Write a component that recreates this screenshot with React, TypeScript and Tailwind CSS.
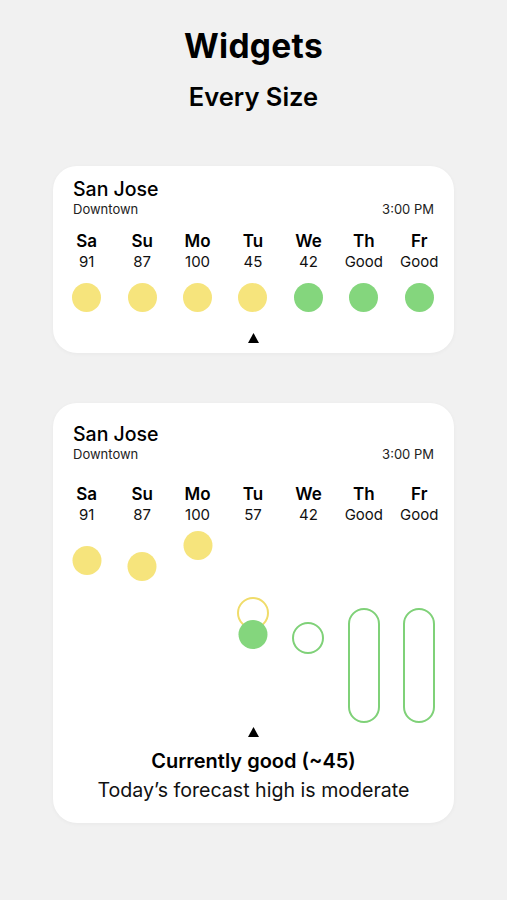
import React from "react";

const YELLOW = "#f6e47c";
const GREEN = "#84d67d";

const days = [
  { d: "Sa", v: "91" },
  { d: "Su", v: "87" },
  { d: "Mo", v: "100" },
  { d: "Tu", v: "45" },
  { d: "We", v: "42" },
  { d: "Th", v: "Good" },
  { d: "Fr", v: "Good" },
];

const days2 = [
  { d: "Sa", v: "91" },
  { d: "Su", v: "87" },
  { d: "Mo", v: "100" },
  { d: "Tu", v: "57" },
  { d: "We", v: "42" },
  { d: "Th", v: "Good" },
  { d: "Fr", v: "Good" },
];

function Triangle() {
  return (
    <svg width="11" height="10" viewBox="0 0 11 10" className="block">
      <polygon points="5.5,0 11,10 0,10" fill="#000" />
    </svg>
  );
}

function Header() {
  return (
    <div className="px-[20px]">
      <div className="text-[19.5px] leading-[23px] font-medium text-black">San Jose</div>
      <div className="flex justify-between text-[13px] leading-[16px] text-[#222]">
        <span>Downtown</span>
        <span>3:00 PM</span>
      </div>
    </div>
  );
}

function DayRow({ data }: { data: { d: string; v: string }[] }) {
  return (
    <div className="grid grid-cols-7 pl-[6px] pr-[7px]">
      {data.map((x) => (
        <div key={x.d} className="flex flex-col items-center">
          <div className="text-[17px] leading-[20px] font-semibold text-black">{x.d}</div>
          <div className="text-[15px] leading-[19px] text-[#111] mt-[1px]">{x.v}</div>
        </div>
      ))}
    </div>
  );
}

type ChartItem = { kind: "dot" | "ring" | "pill"; color: string; top: number; h?: number };

const chart: ChartItem[][] = [
  [{ kind: "dot", color: YELLOW, top: 19 }],
  [{ kind: "dot", color: YELLOW, top: 25 }],
  [{ kind: "dot", color: YELLOW, top: 4 }],
  [
    { kind: "ring", color: "#f0dc6a", top: 72 },
    { kind: "dot", color: GREEN, top: 93 },
  ],
  [{ kind: "ring", color: "#7fd178", top: 97 }],
  [{ kind: "pill", color: "#7fd178", top: 83, h: 115 }],
  [{ kind: "pill", color: "#7fd178", top: 83, h: 115 }],
];

function ChartItemView({ it }: { it: ChartItem }) {
  if (it.kind === "dot") {
    return (
      <div
        className="absolute left-1/2 -translate-x-1/2 w-[29px] h-[29px] rounded-full"
        style={{ top: it.top + 1.5, backgroundColor: it.color }}
      />
    );
  }
  if (it.kind === "ring") {
    return (
      <div
        className="absolute left-1/2 -translate-x-1/2 w-[32px] h-[32px] rounded-full border-[2.5px]"
        style={{ top: it.top, borderColor: it.color }}
      />
    );
  }
  return (
    <div
      className="absolute left-1/2 -translate-x-1/2 w-[32px] rounded-full border-[2.5px]"
      style={{ top: it.top, height: it.h, borderColor: it.color }}
    />
  );
}

export default function App() {
  return (
    <div
      className="min-h-[900px] bg-[#f1f1f1] flex flex-col items-center"
      style={{ fontFamily: "Inter, 'Noto Sans', sans-serif" }}
    >
      <div className="mt-[26px] text-[33.5px] leading-[40px] font-bold text-black tracking-[0.3px]">Widgets</div>
      <div className="mt-[16px] text-[25.5px] leading-[30px] font-semibold text-black">Every Size</div>

      {/* Small widget */}
      <div className="mt-[54px] w-[401px] h-[187px] bg-white rounded-[24px] pt-[12px] shadow-[0_1px_4px_rgba(0,0,0,0.04)]">
        <Header />
        <div className="mt-[14px]">
          <DayRow data={days} />
        </div>
        <div className="grid grid-cols-7 pl-[6px] pr-[7px] mt-[12px]">
          {days.map((x, i) => (
            <div key={x.d} className="flex justify-center">
              <div
                className="w-[29px] h-[29px] rounded-full"
                style={{ backgroundColor: i < 4 ? YELLOW : GREEN }}
              />
            </div>
          ))}
        </div>
        <div className="flex justify-center mt-[21px]">
          <Triangle />
        </div>
      </div>

      {/* Large widget */}
      <div className="mt-[50px] w-[401px] h-[420px] bg-white rounded-[24px] pt-[20px] shadow-[0_1px_4px_rgba(0,0,0,0.04)]">
        <Header />
        <div className="mt-[22px]">
          <DayRow data={days2} />
        </div>
        <div className="grid grid-cols-7 pl-[6px] pr-[7px] h-[200px] mt-[1px]">
          {chart.map((col, i) => (
            <div key={i} className="relative">
              {col.map((it, j) => (
                <ChartItemView key={j} it={it} />
              ))}
            </div>
          ))}
        </div>
        <div className="flex justify-center mt-[2px]">
          <Triangle />
        </div>
        <div className="mt-[13px] text-center text-[20px] leading-[23px] font-semibold text-black">
          Currently good (~45)
        </div>
        <div className="mt-[6px] text-center text-[19.6px] leading-[23px] text-[#111]">
          Today’s forecast high is moderate
        </div>
      </div>
    </div>
  );
}
